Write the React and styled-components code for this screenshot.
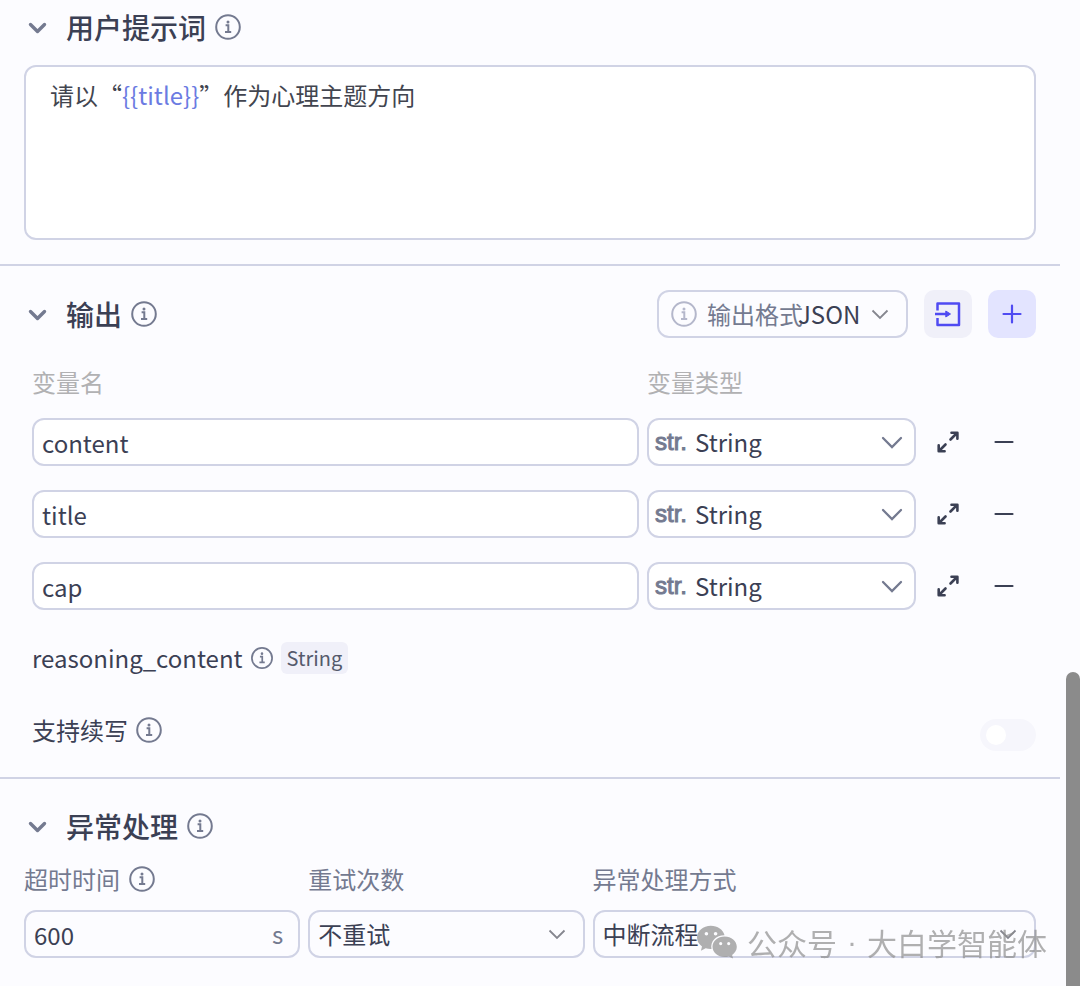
import React, { useState } from "react";
import styled, { createGlobalStyle } from "styled-components";

const color = {
  page: "#fcfcff",
  ink: "#3b4054",
  mute: "#747a90",
  faint: "#b1b1b3",
  line: "#d0d3e5",
  accent: "#504bf2",
};

const GlobalStyle = createGlobalStyle`
  *, *::before, *::after { box-sizing: border-box; }
  html, body, #root { min-height: 100%; }
  body {
    margin: 0;
    background: ${color.page};
    color: ${color.ink};
    font: 400 24px/32px "Noto Sans CJK SC", sans-serif;
  }
  button, input, select { font: inherit; color: inherit; margin: 0; }
  button { padding: 0; border: 0; background: none; cursor: pointer; }
`;

const Page = styled.div`
  display: flex;
  min-height: 100vh;
  overflow: hidden;
`;

const Panel = styled.main`
  flex: 1;
  min-width: 0;
`;

const ScrollTrack = styled.div`
  display: flex;
  flex-direction: column;
  width: 20px;
  padding-left: 6px;
`;

const ScrollSpace = styled.div`
  flex: 682;
`;

const ScrollThumb = styled.div`
  flex: 318;
  border-radius: 8px 8px 0 0;
  background: #8b8b8b;
`;

const Section = styled.section`
  padding: ${(p) => p.$top}px 24px ${(p) => p.$bottom}px;
  border-bottom: ${(p) => (p.$last ? "0" : `2px solid ${color.line}`)};
`;

const SectionHead = styled.header`
  display: flex;
  align-items: center;
  gap: 16px;
  height: 48px;
`;

const Collapse = styled.button`
  display: flex;
  width: 26px;
  color: ${color.mute};
`;

const Title = styled.h2`
  flex: 1;
  display: flex;
  align-items: center;
  gap: 8px;
  margin: 0;
  font-size: 28px;
  line-height: 40px;
  font-weight: 500;
  color: ${color.mute};
`;

const TitleText = styled.span`
  color: ${color.ink};
`;

const PromptBox = styled.div`
  height: 175px;
  margin-top: 14px;
  padding: 12px 24px;
  border: 2px solid ${color.line};
  border-radius: 12px;
  background: #fff;
  color: #42454f;
  outline: 0;
`;

const Variable = styled.span`
  color: #6b7be2;
`;

const FormatField = styled.label`
  position: relative;
  display: flex;
  align-items: center;
  width: 251px;
  height: 48px;
  padding-left: 11px;
  border: 2px solid ${color.line};
  border-radius: 12px;
  color: #b4b7cb;
`;

const FormatName = styled.span`
  margin-left: 9px;
  margin-right: -5px;
  color: ${color.mute};
  white-space: nowrap;
`;

const Select = styled.select`
  appearance: none;
  flex: 1;
  min-width: 0;
  width: 100%;
  height: 100%;
  padding: 0 0 0 ${(p) => p.$left || 0}px;
  border: 0;
  background: transparent;
  color: ${color.ink};
  outline: 0;
`;

const Caret = styled.svg`
  position: absolute;
  right: ${(p) => p.$right}px;
  top: 50%;
  transform: translateY(-50%);
  pointer-events: none;
  color: ${(p) => (p.$strong ? color.mute : "#85868f")};
`;

const SquareButton = styled.button`
  display: grid;
  place-items: center;
  width: 48px;
  height: 48px;
  border-radius: 10px;
  background: ${(p) => (p.$primary ? "#e3e4ff" : "#f0f0f9")};
  color: ${color.accent};
`;

const Grid = styled.div`
  display: grid;
  grid-template-columns: minmax(0, 1fr) 269px 48px 48px;
  column-gap: 8px;
  row-gap: 24px;
  align-items: center;
  padding: 28px 8px 0;
`;

const ColumnName = styled.span`
  grid-column: ${(p) => p.$column};
  margin-bottom: -4px;
  color: ${color.faint};
`;

const FieldBox = styled.div`
  position: relative;
  display: flex;
  align-items: center;
  height: 48px;
  border: 2px solid ${color.line};
  border-radius: 12px;
  background: ${(p) => (p.$plain ? "transparent" : "#fff")};
  overflow: hidden;
`;

const TextInput = styled.input`
  flex: 1;
  min-width: 0;
  height: 100%;
  padding: 0 8px;
  border: 0;
  background: transparent;
  outline: 0;
`;

const TypeMark = styled.span`
  margin-left: 6px;
  width: 40px;
  color: ${color.mute};
  font: 400 24px/32px "Liberation Sans", sans-serif;
  -webkit-text-stroke: 1px ${color.mute};
`;

const RowButton = styled.button`
  display: grid;
  place-items: center;
  width: 48px;
  height: 48px;
`;

const InfoLine = styled.div`
  display: flex;
  align-items: center;
  gap: 7px;
  padding-left: 8px;
  margin-top: ${(p) => p.$gap}px;
  color: ${color.mute};
`;

const InfoText = styled.span`
  color: ${color.ink};
`;

const Badge = styled.span`
  padding: 0 6px;
  border-radius: 6px;
  background: #f0f0f9;
  font-size: 20px;
  color: #555a6c;
`;

const Switch = styled.input`
  appearance: none;
  display: flex;
  align-items: center;
  width: 56px;
  height: 32px;
  margin: 5px 0 -5px auto;
  padding: 0 6px;
  border-radius: 16px;
  background: #f6f6fc;
  &::before {
    content: "";
    width: 20px;
    height: 20px;
    border-radius: 50%;
    background: #fff;
  }
  &:checked { background: ${color.accent}; }
  &:checked::before { margin-left: auto; }
`;

const Fields = styled.div`
  display: grid;
  grid-template-columns: minmax(0, 276fr) minmax(0, 276fr) minmax(0, 443fr);
  column-gap: 8px;
  padding-top: 13px;
`;

const Field = styled.div`
  display: flex;
  flex-direction: column;
  gap: 15px;
`;

const FieldLabel = styled.label`
  display: flex;
  align-items: center;
  gap: 8px;
  color: ${color.mute};
  white-space: nowrap;
`;

const Unit = styled.span`
  padding-right: 15px;
  color: ${color.mute};
`;

const Watermark = styled.div`
  position: fixed;
  right: 33px;
  bottom: 24px;
  display: flex;
  align-items: center;
  gap: 10px;
  font-size: 30px;
  line-height: 40px;
  color: #8f8f8f;
  opacity: 0.7;
  white-space: nowrap;
  pointer-events: none;
`;

const Dot = styled.span`
  font-family: "Liberation Sans", sans-serif;
`;

function InfoIcon({ size = 28 }) {
  return (
    <svg width={size} height={size} viewBox="0 0 28 28" fill="none" stroke="currentColor" strokeWidth="2">
      <circle cx="14" cy="14" r="11.800" />
      <path d="M11.600 12.300h2.700v6.500M11 19h6.200" />
      <circle cx="14" cy="8.900" r="1.500" fill="currentColor" stroke="none" />
    </svg>
  );
}

function ChevronIcon() {
  return (
    <svg width="26" height="26" viewBox="0 0 26 26" fill="none" stroke="currentColor" strokeWidth="3.400" strokeLinecap="round" strokeLinejoin="round">
      <path d="M6.500 10.500l7 7 7-7" />
    </svg>
  );
}

function CaretIcon({ right, strong }) {
  return strong ? (
    <Caret $right={right} $strong width="24" height="24" viewBox="0 0 24 24" fill="none" stroke="currentColor" strokeWidth="2.300" strokeLinecap="round">
      <path d="M3 8L12 17l9-9" />
    </Caret>
  ) : (
    <Caret $right={right} width="18" height="18" viewBox="0 0 18 18" fill="none" stroke="currentColor" strokeWidth="1.800">
      <path d="M1.500 5.500L9 13l7.500-7.500" />
    </Caret>
  );
}

function ImportIcon() {
  return (
    <svg width="28" height="28" viewBox="0 0 28 28" fill="none" stroke="currentColor" strokeWidth="2.500" strokeLinejoin="round">
      <path d="M3.500 10.500V3.500h21.500v21.500H3.500v-7" />
      <path d="M1 14H12" />
      <path d="M11.800 11l4.700 3-4.700 3z" fill="currentColor" strokeWidth="1" />
    </svg>
  );
}

function PlusIcon() {
  return (
    <svg width="20" height="20" viewBox="0 0 20 20" stroke="currentColor" strokeWidth="2.200" strokeLinecap="round">
      <path d="M10 1.500v17M1.500 10h17" />
    </svg>
  );
}

function MinusIcon() {
  return (
    <svg width="20" height="20" viewBox="0 0 20 20" stroke="currentColor" strokeWidth="2.200" strokeLinecap="round">
      <path d="M1.500 10h17" />
    </svg>
  );
}

function ExpandIcon() {
  return (
    <svg width="24" height="24" viewBox="0 0 24 24" fill="none" stroke="currentColor" strokeWidth="2.600" strokeLinecap="round" strokeLinejoin="round">
      <path d="M14.500 9.500L21 3M15.500 2.800h5.900v5.900M9.500 14.500L3 21M2.700 15.400v5.900h5.900" />
    </svg>
  );
}

function WeChatIcon() {
  return (
    <svg width="40" height="34" viewBox="0 0 40 34" fill="currentColor">
      <path
        fillRule="evenodd"
        d="M13.800.8C6.200.8 0 6 0 12.500c0 3.600 1.900 6.700 5 8.900l-1.100 4.300 4.800-2.500c1.600.5 3.300.8 5.100.8h.7c-1.500-7.600 4.700-13.800 13-13.700C26.300 4.800 20.600.8 13.800.8zM9.400 6.900a1.800 1.800 0 110 3.600 1.800 1.800 0 010-3.600zm9.200 0a1.800 1.800 0 110 3.600 1.800 1.800 0 010-3.600z"
      />
      <path
        fillRule="evenodd"
        d="M27.600 11.400c-6.700 0-12.100 4.600-12.100 10.300S20.900 32 27.600 32c1.500 0 2.900-.2 4.200-.6l4.300 2.200-1-3.700c2.900-1.900 4.700-4.900 4.700-8.200 0-5.700-5.500-10.300-12.200-10.300zM23.700 17a1.600 1.600 0 110 3.200 1.600 1.600 0 010-3.200zm8 0a1.600 1.600 0 110 3.200 1.600 1.600 0 010-3.200z"
      />
    </svg>
  );
}

function Heading({ text, children }) {
  return (
    <SectionHead>
      <Collapse aria-label={text}>
        <ChevronIcon />
      </Collapse>
      <Title>
        <TitleText>{text}</TitleText>
        <InfoIcon />
      </Title>
      {children}
    </SectionHead>
  );
}

function VariableRow({ name }) {
  const [value, setValue] = useState(name);
  return (
    <>
      <FieldBox>
        <TextInput aria-label="变量名" value={value} onChange={(e) => setValue(e.target.value)} />
      </FieldBox>
      <FieldBox>
        <TypeMark aria-hidden="true">str.</TypeMark>
        <Select aria-label="变量类型">
          <option>String</option>
        </Select>
        <CaretIcon right={10} strong />
      </FieldBox>
      <RowButton aria-label="展开">
        <ExpandIcon />
      </RowButton>
      <RowButton aria-label="删除">
        <MinusIcon />
      </RowButton>
    </>
  );
}

export default function App() {
  return (
    <>
      <GlobalStyle />
      <Page>
        <Panel>
          <Section $top={3} $bottom={24}>
            <Heading text="用户提示词" />
            <PromptBox role="textbox" aria-label="用户提示词" aria-multiline="true" contentEditable suppressContentEditableWarning spellCheck={false}>
              请以“<Variable>{"{{title}}"}</Variable>”作为心理主题方向
            </PromptBox>
          </Section>

          <Section $top={24} $bottom={31}>
            <Heading text="输出">
              <FormatField>
                <InfoIcon />
                <FormatName>输出格式</FormatName>
                <Select>
                  <option>JSON</option>
                </Select>
                <CaretIcon right={17} />
              </FormatField>
              <SquareButton aria-label="导入">
                <ImportIcon />
              </SquareButton>
              <SquareButton aria-label="新增" $primary>
                <PlusIcon />
              </SquareButton>
            </Heading>
            <Grid>
              <ColumnName $column="1">变量名</ColumnName>
              <ColumnName $column="2 / -1">变量类型</ColumnName>
              {["content", "title", "cap"].map((name) => (
                <VariableRow key={name} name={name} />
              ))}
            </Grid>
            <InfoLine $gap={32}>
              <InfoText>reasoning_content</InfoText>
              <InfoIcon size={24} />
              <Badge>String</Badge>
            </InfoLine>
            <InfoLine $gap={40}>
              <InfoText as="label" htmlFor="continue">支持续写</InfoText>
              <InfoIcon />
              <Switch id="continue" type="checkbox" role="switch" />
            </InfoLine>
          </Section>

          <Section $top={23} $bottom={24} $last>
            <Heading text="异常处理" />
            <Fields>
              <Field>
                <FieldLabel htmlFor="timeout">
                  超时时间
                  <InfoIcon />
                </FieldLabel>
                <FieldBox $plain>
                  <TextInput id="timeout" defaultValue="600" />
                  <Unit>s</Unit>
                </FieldBox>
              </Field>
              <Field>
                <FieldLabel htmlFor="retry">重试次数</FieldLabel>
                <FieldBox $plain>
                  <Select id="retry" $left={8}>
                    <option>不重试</option>
                  </Select>
                  <CaretIcon right={17} />
                </FieldBox>
              </Field>
              <Field>
                <FieldLabel htmlFor="failure">异常处理方式</FieldLabel>
                <FieldBox $plain>
                  <Select id="failure" $left={8}>
                    <option>中断流程</option>
                  </Select>
                  <CaretIcon right={17} />
                </FieldBox>
              </Field>
            </Fields>
          </Section>
        </Panel>
        <ScrollTrack aria-hidden="true">
          <ScrollSpace />
          <ScrollThumb />
        </ScrollTrack>
      </Page>
      <Watermark>
        <WeChatIcon />
        <span>公众号</span>
        <Dot>·</Dot>
        <span>大白学智能体</span>
      </Watermark>
    </>
  );
}
